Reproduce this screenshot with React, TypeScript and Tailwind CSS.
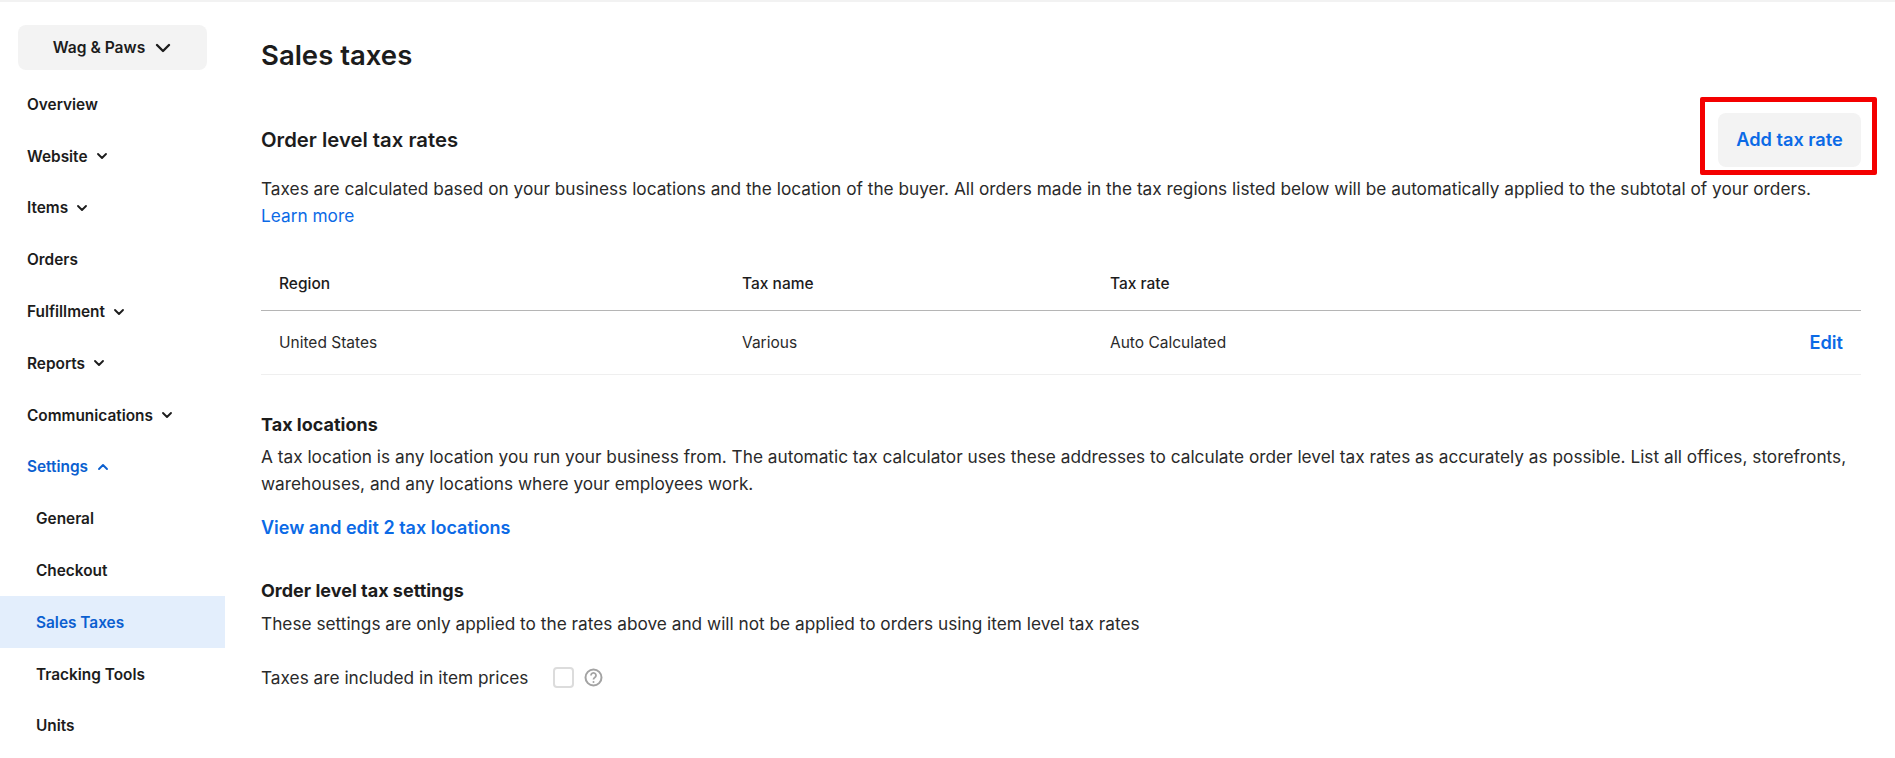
import React from 'react';
import { ChevronDown, ChevronUp } from 'lucide-react';

const navRow = 'flex h-[51.8px] items-center text-[15.4px] font-semibold';

function NavItem({ label, caret }: { label: string; caret?: boolean }) {
  return (
    <div className={`${navRow} pl-[27px] text-[#1c1c1c]`}>
      {label}
      {caret && <ChevronDown className="ml-[6px] h-[16px] w-[16px]" strokeWidth={2.8} />}
    </div>
  );
}

function SubItem({ label, active }: { label: string; active?: boolean }) {
  return (
    <div className={`${navRow} pl-[36px] ${active ? 'bg-[#e3eefc] text-[#0b5fd0]' : 'text-[#1c1c1c]'}`}>{label}</div>
  );
}

export default function App() {
  return (
    <div className="relative h-[758px] w-[1895px] overflow-hidden bg-white font-['Inter',sans-serif] text-[#1c1c1c]">
      <div className="h-[2px] bg-[#f2f2f2]" />
      <div className="flex">
        <aside className="w-[225px] shrink-0">
          <div className="px-[18px] pt-[23px]">
            <div className="flex h-[45px] items-center justify-center rounded-[8px] bg-[#f3f3f3] pl-[3px] text-[15.6px] font-semibold">
              Wag &amp; Paws
              <ChevronDown className="ml-[6px] h-[24px] w-[24px]" strokeWidth={2.4} />
            </div>
          </div>
          <nav className="mt-[8.5px]">
            <NavItem label="Overview" />
            <NavItem label="Website" caret />
            <NavItem label="Items" caret />
            <NavItem label="Orders" />
            <NavItem label="Fulfillment" caret />
            <NavItem label="Reports" caret />
            <NavItem label="Communications" caret />
            <div className={`${navRow} pl-[27px] text-[#0b5fd0]`}>
              Settings
              <ChevronUp className="ml-[7px] h-[16px] w-[16px]" strokeWidth={2.8} />
            </div>
            <SubItem label="General" />
            <SubItem label="Checkout" />
            <SubItem label="Sales Taxes" active />
            <SubItem label="Tracking Tools" />
            <SubItem label="Units" />
          </nav>
        </aside>

        <main className="ml-[36px] w-[1600px]">
          <h1 className="mt-[36px] text-[27.5px] leading-[34px] font-semibold">Sales taxes</h1>
          <div className="mt-[41px] flex h-[54px] items-center justify-between">
            <h2 className="text-[20.3px] font-semibold">Order level tax rates</h2>
            <button className="h-[54px] w-[143px] rounded-[8px] bg-[#f3f3f3] text-[18.2px] font-semibold text-[#0b6ae6]">
              Add tax rate
            </button>
          </div>
          <p className="mt-[9px] text-[17.25px] leading-[26.5px] text-[#2a2a2a]">
            Taxes are calculated based on your business locations and the location of the buyer. All orders made in the tax regions listed below will be automatically applied to the subtotal of your orders.
            <br />
            <span className="text-[#0b6ae6]">Learn more</span>
          </p>

          <div className="mt-[28px] flex h-[54px] items-center border-b border-[#b5b5b5] text-[15.5px] font-medium">
            <div className="w-[481px] pl-[18px]">Region</div>
            <div className="w-[368px]">Tax name</div>
            <div>Tax rate</div>
          </div>
          <div className="flex h-[64px] items-center border-b border-[#efefef] text-[15.5px] text-[#2a2a2a]">
            <div className="w-[481px] pl-[18px]">United States</div>
            <div className="w-[368px]">Various</div>
            <div>Auto Calculated</div>
            <div className="mr-[18px] ml-auto text-[18.2px] font-semibold text-[#0b6ae6]">Edit</div>
          </div>

          <h3 className="mt-[38px] text-[18px] leading-[24px] font-bold">Tax locations</h3>
          <p className="mt-[7px] text-[17.25px] leading-[26.5px] text-[#2a2a2a]">
            A tax location is any location you run your business from. The automatic tax calculator uses these addresses to calculate order level tax rates as accurately as possible. List all offices, storefronts,
            <br />
            warehouses, and any locations where your employees work.
          </p>
          <div className="mt-[17px] text-[18px] font-semibold text-[#0b6ae6]">View and edit 2 tax locations</div>

          <h3 className="mt-[38px] text-[18px] leading-[24px] font-bold">Order level tax settings</h3>
          <p className="mt-[8px] text-[17.25px] leading-[26.5px] text-[#2a2a2a]">
            These settings are only applied to the rates above and will not be applied to orders using item level tax rates
          </p>
          <div className="mt-[27px] flex items-center text-[17.25px] text-[#2a2a2a]">
            <span>Taxes are included in item prices</span>
            <span className="ml-[25px] h-[21px] w-[21px] rounded-[4px] border-2 border-[#dcdcdc]" />
            <svg className="ml-[10px]" width="19" height="19" viewBox="0 0 19 19" fill="none" stroke="#a3a3a3" strokeWidth="2">
              <circle cx="9.5" cy="9.5" r="8" />
              <path d="M7 7.4a2.5 2.5 0 1 1 3.8 2.1c-.8.5-1.3 1-1.3 1.9" strokeWidth="1.8" />
              <circle cx="9.5" cy="14" r="1" fill="#a3a3a3" stroke="none" />
            </svg>
          </div>
        </main>
      </div>
      <div className="absolute top-[97px] left-[1700px] h-[78px] w-[177px] rounded-[2px] border-[5px] border-[#f40000]" />
    </div>
  );
}
